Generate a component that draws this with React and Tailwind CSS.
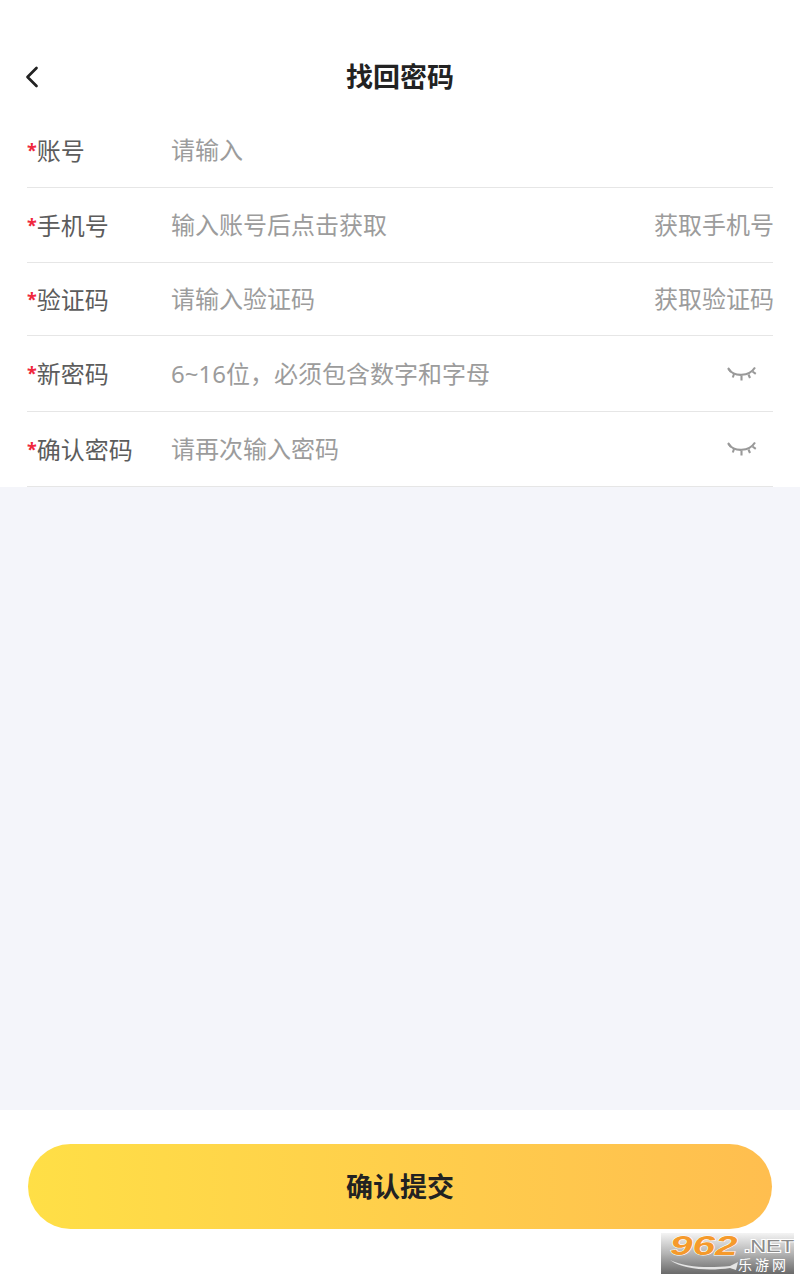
import { ChevronLeft } from "lucide-react";

const rows = [
  { label: "账号", placeholder: "请输入", height: "h-[73px] pb-[2px]" },
  { label: "手机号", placeholder: "输入账号后点击获取", action: "获取手机号", height: "h-[75px]" },
  { label: "验证码", placeholder: "请输入验证码", action: "获取验证码", height: "h-[73px]" },
  { label: "新密码", placeholder: "6~16位，必须包含数字和字母", eye: true, height: "h-[76px]" },
  { label: "确认密码", placeholder: "请再次输入密码", eye: true, height: "h-[75px]" },
];

function ClosedEye() {
  return (
    <svg width="30" height="16" viewBox="0 0 30 16" fill="none" stroke="#999999" strokeWidth="2.1">
      <path d="M1.5 3C7 11 22 11 28 1.5" />
      <path d="M1 2L4 6" />
      <path d="M7 8L5.8 11.5" />
      <path d="M14.5 9.5V14.5" />
      <path d="M21.5 8.5L23 12" />
      <path d="M25.5 5.5L28.8 7.8" />
    </svg>
  );
}

function Row({ label, placeholder, action, eye, height }) {
  return (
    <div className={`flex items-center border-b border-[#e6e6e6] ${height}`}>
      <div className="flex w-[144px] items-center pt-[1px] text-[24px] leading-none text-[#5c5c5c]">
        <span className="pb-[2px] text-[18px] font-bold text-[#f0273c]">*</span>
        {label}
      </div>
      <div className="flex-1 text-[24px] leading-none text-[#9c9c9c]">{placeholder}</div>
      {action && <div className="-mr-[1px] text-[24px] leading-none text-[#9c9c9c]">{action}</div>}
      {eye && (
        <div className="mr-[16px]">
          <ClosedEye />
        </div>
      )}
    </div>
  );
}

function Watermark() {
  return (
    <div className="flex h-[41px] w-[133px] flex-col bg-gradient-to-b from-[#f4f4f4] via-[#b4b4b4] to-[#6a6a6a] pl-[9px] pt-[2px]">
      <div className="flex h-[23px] items-center">
        <span className="w-[74px] origin-left scale-x-[1.5] text-[27px] font-bold italic leading-none text-[#f59a2c] [font-family:'Liberation_Sans',sans-serif] [-webkit-text-stroke:1px_#ffffff] [paint-order:stroke_fill]">
          962
        </span>
        <span className="origin-left scale-x-[1.3] text-[17px] leading-none text-[#8a8a8a] [font-family:'Liberation_Sans',sans-serif] [-webkit-text-stroke:2px_#ffffff] [paint-order:stroke_fill]">
          .NET
        </span>
      </div>
      <div className="flex items-center">
        <svg width="68" height="12" viewBox="0 0 68 12" className="shrink-0">
          <path d="M0 1C16 9 40 9 60 7L68 3L66 11L60 9C40 12 14 11 0 1Z" fill="#e4e4e4" />
        </svg>
        <span className="text-[14px] leading-[14px] tracking-[3px] text-white">乐游网</span>
      </div>
    </div>
  );
}

export default function App() {
  return (
    <div className="flex h-[1280px] w-[800px] flex-col overflow-hidden bg-white [font-family:'Noto_Sans','Noto_Sans_CJK_SC',sans-serif]">
      <div className="relative flex h-[115px] items-end justify-center pb-[19px]">
        <ChevronLeft className="absolute left-[14px] top-[59px]" size={36} strokeWidth={1.8} color="#222222" />
        <h1 className="text-[27px] font-bold leading-[38px] text-[#222222]">找回密码</h1>
      </div>
      <div className="px-[27px]">
        {rows.map((row) => (
          <Row key={row.label} {...row} />
        ))}
      </div>
      <div className="h-[623px] bg-[#f4f5fa]" />
      <div className="relative flex-1 px-[28px] pt-[34px]">
        <button className="h-[85px] w-full rounded-full bg-gradient-to-r from-[#ffdf46] to-[#ffbe4f] pt-[2px] text-[27px] font-bold text-[#222222]">
          确认提交
        </button>
        <div className="absolute left-[661px] top-[123px]">
          <Watermark />
        </div>
      </div>
    </div>
  );
}
